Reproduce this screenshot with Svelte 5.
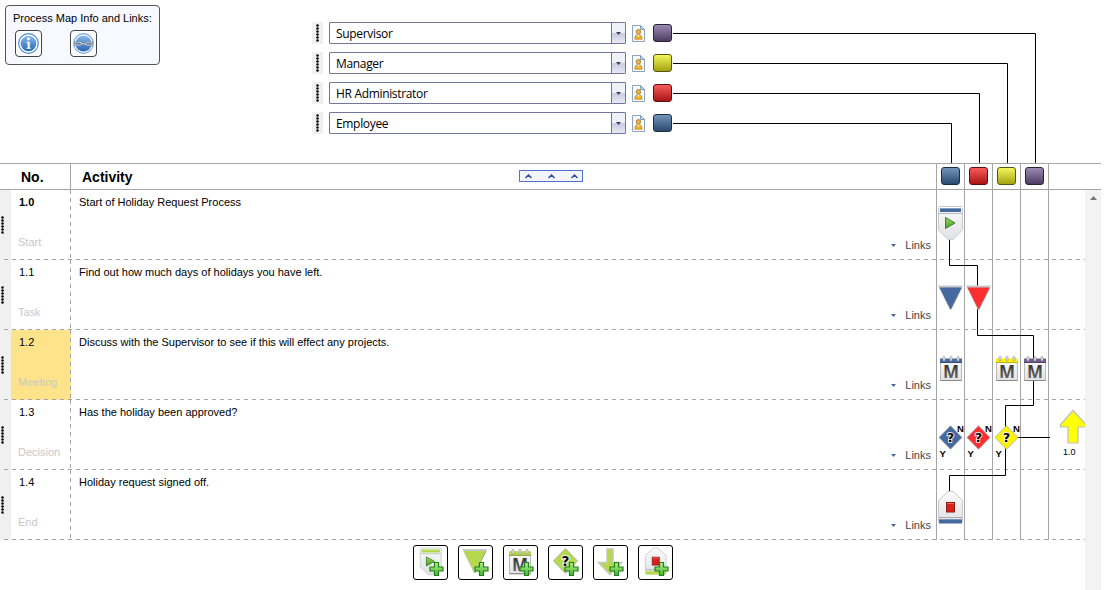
<script>
  let roles = [
    { name: "Supervisor", color: "purple" },
    { name: "Manager", color: "yellow" },
    { name: "HR Administrator", color: "red" },
    { name: "Employee", color: "blue" },
  ];

  const lanes = ["blue", "red", "yellow", "purple"];

  let selected = "1.2";

  let steps = [
    { no: "1.0", type: "Start", text: "Start of Holiday Request Process", shapes: ["start", "", "", ""] },
    { no: "1.1", type: "Task", text: "Find out how much days of holidays you have left.", shapes: ["task", "task", "", ""] },
    {
      no: "1.2",
      type: "Meeting",
      text: "Discuss with the Supervisor to see if this will effect any projects.",
      shapes: ["meeting", "", "meeting", "meeting"],
    },
    {
      no: "1.3",
      type: "Decision",
      text: "Has the holiday been approved?",
      shapes: ["decision", "decision", "decision", ""],
      jump: "1.0",
    },
    { no: "1.4", type: "End", text: "Holiday request signed off.", shapes: ["end", "", "", ""] },
  ];

  // place of each shape inside its toolbar button
  const tools = [
    { kind: "start", transform: "translate(5 -11.3) scale(0.87 0.81)" },
    { kind: "task", transform: "translate(2.3 -22.5)" },
    { kind: "meeting", transform: "translate(2 -23.8) scale(1 1.02)" },
    { kind: "decision", transform: "translate(2.3 -24.4) scale(1.05)" },
    { kind: "arrow", transform: "translate(-6 0.5)" },
    { kind: "end", transform: "translate(5 -15.8) scale(0.87 0.83)" },
  ];

  const colors = {
    blue: "#44699f",
    red: "#fb2f2f",
    yellow: "#fff200",
    purple: "#70598c",
    green: "#b5d84e",
  };
</script>

{#snippet shape(kind, color)}
  {#if kind === "start"}
    <path d="M1.5 17.5q0-1 1-1h22q1 0 1 1V40L16 49.5H11L1.5 40z" fill="url(#paper)" stroke="#c9cacd" />
    <rect x="3" y="18" width="21" height="4" fill={colors[color]} />
    <path d="M3 18.5h21" stroke="#fff" stroke-opacity=".35" />
    <path d="M2 23.5h23" stroke="#b8bbc0" />
    <path d="M8.5 27.5v11l9.5-5.5z" fill="url(#play)" stroke="#3d8126" />
  {:else if kind === "task"}
    <path d="M1 25.5h25l-11.6 24h-1.8z" fill="#c5c7ca" />
    <path d="M2.4 27.5h22.2L13.5 49.5z" fill={colors[color]} />
    <path d="M14 49.2 24.6 28" stroke="#333" stroke-opacity=".3" fill="none" />
  {:else if kind === "meeting"}
    <rect x="3.5" y="29.5" width="21" height="21" fill="url(#paper)" stroke="#b9babb" />
    <path d="M3.5 50.5h21" stroke="#888" />
    <rect x="3" y="28.5" width="22" height="4.5" fill={colors[color]} />
    <path d="M3 32.5h22" stroke="#000" stroke-opacity=".25" />
    {#each [6, 13, 20] as x}
      <rect {x} y="26.5" width="2" height="4.5" rx="1" fill="#eee" stroke="#9b9b9b" stroke-width=".8" />
    {/each}
    <text x="14" y="47.5" class="letter" fill="url(#steel)">M</text>
  {:else if kind === "decision"}
    <path d="M13.5 25.7 25 37.5 13.5 49.3 2 37.5z" fill={colors[color]} stroke="#a9abad" stroke-width=".8" />
    <text x="13.5" y="42.2" class="question">?</text>
  {:else if kind === "arrow"}
    <path d="M19 2.5h6v13.5h8.500L22 28 10.500 16H19z" fill={colors[color]} stroke="#c4c8bc" stroke-width="1.5" />
  {:else if kind === "end"}
    <path d="M1.5 30.5 11 21.5h5l9.5 9v21q0 1-1 1h-22q-1 0-1-1z" fill="url(#paper)" stroke="#c9cacd" />
    <path d="M2 47.5h23" stroke="#a9abae" />
    <rect x="2" y="49" width="23" height="4.5" fill={colors[color]} />
    <path d="M2 49.5h23" stroke="#fff" stroke-opacity=".3" />
    <rect x="9.5" y="32.5" width="8" height="9.5" fill="#d9231a" stroke="#8e1a12" />
    <path d="M10 33.5h7" stroke="#ef6b55" />
  {/if}
{/snippet}

{#snippet dots()}
  <svg class="dots" width="3" height="18" viewBox="0 0 3 18">
    {#each [0, 1, 2, 3, 4, 5] as i}
      <circle cx="1.5" cy={1.5 + i * 3} r="1.25" />
    {/each}
  </svg>
{/snippet}

<svg class="defs" width="0" height="0">
  <defs>
    <linearGradient id="paper" x1="0" y1="0" x2="0" y2="1">
      <stop offset="0" stop-color="#fbfbfd" />
      <stop offset="1" stop-color="#dfe1e4" />
    </linearGradient>
    <linearGradient id="play" x1="0" y1="0" x2="0" y2="1">
      <stop offset="0" stop-color="#a1dd5d" />
      <stop offset="1" stop-color="#3e9a24" />
    </linearGradient>
    <linearGradient id="plus" x1="0" y1="0" x2="0" y2="1">
      <stop offset="0" stop-color="#b4ef86" />
      <stop offset="1" stop-color="#46b931" />
    </linearGradient>
    <linearGradient id="steel" x1="0" y1="0" x2="0" y2="1">
      <stop offset="0" stop-color="#222" />
      <stop offset="1" stop-color="#777" />
    </linearGradient>
    <linearGradient id="ball" x1="0" y1="0" x2="0" y2="1">
      <stop offset="0" stop-color="#8cbcec" />
      <stop offset="1" stop-color="#2567b4" />
    </linearGradient>
  </defs>
</svg>

<div class="page">
  <header class="top">
    <div class="info">
      <span class="infoTitle">Process Map Info and Links:</span>
      <div class="infoButtons">
        <button class="infoButton" aria-label="Info">
          <svg width="25" height="25" viewBox="0 0 25 25">
            <circle cx="12.5" cy="12.5" r="9.8" fill="#fff" stroke="#4f8bcd" stroke-width="1.2" />
            <circle cx="12.5" cy="12.5" r="7.8" fill="url(#ball)" />
            <circle cx="12.5" cy="8" r="1.4" fill="#fff" />
            <path d="M10.5 10.8h3.2v6h1.3v1h-4.6v-1h1.3v-5h-1.2z" fill="#fff" />
          </svg>
        </button>
        <button class="infoButton" aria-label="Links">
          <svg width="25" height="25" viewBox="0 0 25 25">
            <circle cx="12.5" cy="12.5" r="9.8" fill="#fff" stroke="#78a5dc" stroke-width="1.2" />
            <circle cx="12.5" cy="12.5" r="8" fill="url(#ball)" />
            <g fill="none" stroke="#5c6b7c" stroke-width="2">
              <rect x="4" y="11.2" width="6.5" height="2.8" rx="1.4" />
              <rect x="14.5" y="11.2" width="6.5" height="2.8" rx="1.4" />
              <path d="m9.5 12 5.5 1.500" />
            </g>
            <g fill="none" stroke="#d9dfe5" stroke-width="1">
              <rect x="4" y="11.2" width="6.5" height="2.8" rx="1.4" />
              <rect x="14.5" y="11.2" width="6.5" height="2.8" rx="1.4" />
              <path d="m9.5 12 5.5 1.500" />
            </g>
          </svg>
        </button>
      </div>
    </div>

    <div class="roles">
      {#each roles as role}
        <div class="role">
          <div class="roleHandle">{@render dots()}</div>
          <div class="select">
            <span>{role.name}</span>
            <div class="selectArrow">
              <svg width="5" height="3" viewBox="0 0 5 3"><path d="M0 0h5L2.5 3z" fill="#414161" /></svg>
            </div>
          </div>
          <svg class="person" width="13" height="17" viewBox="0 0 13 17">
            <path d="M.5.5h8l4 4v12H.5z" fill="#f6fafd" stroke="#8da4bd" />
            <path d="M8.5.5v4h4z" fill="#cfdeed" stroke="#7e9abb" />
            <path d="M2.8 14.2q-.3-4.400 3.6-4.600 4 .2 3.700 4.600z" fill="#f0b51f" stroke="#bc8425" stroke-width=".7" />
            <circle cx="6.4" cy="6.8" r="2.3" fill="#e9b04a" stroke="#a9782f" stroke-width=".8" />
            <path d="m5.700 9.800.8 2.600.8-2.600z" fill="#fff" />
          </svg>
          <span class="swatch {role.color}"></span>
        </div>
      {/each}
    </div>
  </header>

  <div class="tableHead">
    <div class="headNo">No.</div>
    <div class="headActivity">
      <span>Activity</span>
      <svg class="collapse" width="64" height="12" viewBox="0 0 64 12">
        <rect x=".5" y=".5" width="63" height="11" fill="#f4f5fa" stroke="#4b74d6" />
        <path d="M6.5 8 9.5 5l3 3M29.5 8l3-3 3 3M52.5 8l3-3 3 3" fill="none" stroke="#2d4fae" stroke-width="1.5" />
      </svg>
    </div>
    {#each lanes as lane}
      <div class="lane"><span class="swatch {lane}"></span></div>
    {/each}
    <div class="laneEnd"></div>
  </div>

  <div class="body">
    <div class="steps">
      {#each steps as step}
        <div class="step">
          <div class="stepHandle">{@render dots()}</div>
          <div class="stepNo" class:selected={step.no === selected}>
            <span class="no" class:bold={step.type === "Start"}>{step.no}</span>
            <span class="type">{step.type}</span>
          </div>
          <div class="activity">
            <span>{step.text}</span>
            <span class="links">
              <svg width="5" height="3" viewBox="0 0 5 3"><path d="M0 0h5L2.5 3z" fill="#49649a" /></svg>
              Links
            </span>
          </div>
          {#each step.shapes as kind, i}
            <div class="lane">
              {#if kind}
                <svg class="shape" width="27" height="70" viewBox="0 0 27 70">
                  {@render shape(kind, lanes[i])}
                  {#if kind === "decision"}
                    <text x="20" y="32" class="answer">N</text>
                    <text x="2.5" y="57" class="answer">Y</text>
                  {/if}
                </svg>
              {/if}
            </div>
          {/each}
          <div class="laneEnd">
            {#if step.jump}
              <svg class="shape" width="36" height="70" viewBox="0 0 36 70">
                <path d="M24 10.5 11.5 24.5V27H19v16h10V27h8v-2.5z" fill="#ffff05" stroke="#bdbdbd" stroke-width="1.2" />
                <text x="14" y="55" class="jump">{step.jump}</text>
              </svg>
            {/if}
          </div>
        </div>
      {/each}

      <div class="toolbar">
        {#each tools as tool}
          <button class="tool" aria-label="Add {tool.kind}">
            <svg width="33" height="33" viewBox="0 0 33 33">
              <g transform={tool.transform}>{@render shape(tool.kind, "green")}</g>
              <path
                d="M20.500 16.500h4V21H29v4h-4.500v4.500h-4V25H16v-4h4.500z"
                fill="url(#plus)"
                stroke="#247f20"
                stroke-width="1.2"
              />
            </svg>
          </button>
        {/each}
      </div>
    </div>

    <div class="scrollbar">
      <svg width="7" height="4" viewBox="0 0 7 4"><path d="M0 4 3.5 0 7 4z" fill="#777" /></svg>
    </div>
  </div>

  <!-- lines from the roles to their lanes, and from step to step -->
  <svg class="connectors" width="1107" height="590" viewBox="0 0 1107 590">
    <path d="M673 33.5H1035.5V163M673 63.5H1007.5V163M673 93.5H979.5V163M673 123.5H951.5V163" />
    <path d="M949.5 239V265.5H977.5V335.5H1033.5V405.5H1005.5V475.5H949.5V492" />
    <path d="M1017 437.5H1050" />
  </svg>
</div>

<style>
  :global(body) {
    background: #fff;
  }

  .page {
    position: relative;
    width: 1107px;
    height: 590px;
    overflow: hidden;
    font-family: "Liberation Sans", Arial, sans-serif;
    font-size: 11px;
    color: #000;
  }

  .defs {
    position: absolute;
  }

  svg {
    display: block;
    flex: none;
  }

  button {
    padding: 0;
    background: #fff;
    display: flex;
    align-items: center;
    justify-content: center;
  }

  .top {
    display: flex;
    align-items: flex-start;
    height: 163px;
    box-sizing: border-box;
    padding: 5px 0 0 5px;
  }

  .info {
    width: 155px;
    height: 60px;
    box-sizing: border-box;
    padding: 6px 0 0 7px;
    border: 1px solid #555;
    border-radius: 4px;
    background: #f8f8ff;
  }

  .infoTitle {
    display: block;
    line-height: 13px;
    white-space: nowrap;
  }

  .infoButtons {
    display: flex;
    gap: 28px;
    margin: 5px 0 0 2px;
  }

  .infoButton {
    width: 27px;
    height: 27px;
    border: 1px solid #444;
    border-radius: 4px;
  }

  .roles {
    display: flex;
    flex-direction: column;
    gap: 8px;
    margin: 17px 0 0 152px;
  }

  .role {
    display: flex;
    align-items: center;
    height: 22px;
  }

  .roleHandle {
    display: flex;
    align-items: center;
    justify-content: center;
    width: 11px;
    height: 22px;
    background: #f0f0f0;
  }

  .select {
    display: flex;
    justify-content: space-between;
    width: 297px;
    height: 22px;
    box-sizing: border-box;
    margin-left: 6px;
    border: 1px solid #75759a;
    border-radius: 1px;
    font-family: "Open Sans", "Noto Sans", sans-serif;
    font-size: 12px;
    line-height: 22px;
  }

  .select span {
    padding-left: 6px;
    letter-spacing: -0.33px;
  }

  .selectArrow {
    display: flex;
    align-items: center;
    justify-content: center;
    width: 13px;
    border-left: 1px solid #75759a;
    background: linear-gradient(#f0f0f8 50%, #c6c9e0 50%, #e9eaf5);
  }

  .person {
    margin: 0 8px 0 6px;
  }

  .swatch {
    width: 19px;
    height: 18px;
    box-sizing: border-box;
    border: 1px solid #333;
    border-radius: 3px;
  }

  .blue {
    background: linear-gradient(#7494bb, #2c4a6f);
    border-color: #1c2e45;
  }

  .red {
    background: linear-gradient(#f95b5b, #a91414);
    border-color: #5b1010;
  }

  .yellow {
    background: linear-gradient(#f5f55c, #a3a311);
    border-color: #555510;
  }

  .purple {
    background: linear-gradient(#9a89b1, #4e3d63);
    border-color: #2b2238;
  }

  .tableHead {
    display: flex;
    width: 1101px;
    height: 27px;
    box-sizing: border-box;
    border-top: 1px solid #a5a5a5;
    border-bottom: 1px solid #a5a5a5;
    font-size: 14px;
    font-weight: bold;
    line-height: 27px;
  }

  .headNo {
    width: 71px;
    box-sizing: border-box;
    padding-left: 21px;
    border-right: 1px solid #a5a5a5;
  }

  .headActivity {
    display: flex;
    flex: 1;
    padding-left: 11px;
  }

  .headActivity span {
    width: 437px;
  }

  .collapse {
    margin-top: 6px;
  }

  .lane {
    width: 28px;
    box-sizing: border-box;
    border-left: 1px solid #a5a5a5;
  }

  .lane .swatch {
    display: block;
    margin: 3px 0 0 4px;
  }

  .laneEnd {
    width: 37px;
    box-sizing: border-box;
    border-left: 1px solid #a5a5a5;
  }

  .tableHead .laneEnd {
    width: 53px;
  }

  .body {
    display: flex;
    height: 400px;
  }

  .steps {
    width: 1085px;
  }

  .step {
    display: flex;
    position: relative;
    height: 70px;
  }

  .step::after {
    content: "";
    position: absolute;
    left: 4px;
    right: 0;
    bottom: 0;
    height: 1px;
    background: repeating-linear-gradient(90deg, #a5a5a5 0 4px, transparent 4px 8px);
  }

  .stepHandle {
    display: flex;
    align-items: center;
    width: 11px;
    box-sizing: border-box;
    padding-left: 1px;
    background: #f0f0f0;
  }

  .stepNo {
    display: flex;
    flex-direction: column;
    justify-content: space-between;
    position: relative;
    width: 60px;
    box-sizing: border-box;
    padding: 6px 0 11px 7px;
    line-height: 13px;
  }

  .stepNo::after {
    content: "";
    position: absolute;
    top: 0;
    right: 0;
    bottom: 0;
    width: 1px;
    background: repeating-linear-gradient(#a5a5a5 0 4px, transparent 4px 8px);
  }

  .selected {
    background: #ffe38a;
  }

  .no {
    padding-left: 1px;
  }

  .bold {
    font-weight: bold;
  }

  .type {
    color: #c8c8c8;
  }

  .activity {
    display: flex;
    flex: 1;
    flex-direction: column;
    justify-content: space-between;
    padding: 6px 5px 8px 8px;
    line-height: 13px;
  }

  .links {
    display: flex;
    align-items: center;
    align-self: flex-end;
    gap: 9px;
    color: #444;
  }

  .shape {
    position: relative;
    z-index: 2;
    overflow: visible;
  }

  .laneEnd .shape {
    overflow: hidden;
  }

  .letter {
    font: bold 17px "Open Sans", "Liberation Sans", sans-serif;
    text-anchor: middle;
  }

  .question {
    font: bold 13px "DejaVu Sans", sans-serif;
    text-anchor: middle;
    fill: #000;
    stroke: #fff;
    stroke-width: 1.6px;
    paint-order: stroke;
  }

  .answer {
    font: bold 9.5px "Liberation Sans", Arial, sans-serif;
  }

  .jump {
    font-size: 9px;
  }

  .toolbar {
    display: flex;
    gap: 10px;
    margin: 5px 0 0 413px;
  }

  .tool {
    width: 35px;
    height: 35px;
    border: 1px solid #000;
    border-radius: 3px;
  }

  .scrollbar {
    display: flex;
    justify-content: center;
    width: 16px;
    box-sizing: border-box;
    padding-top: 6px;
    background: #f3f3f3;
  }

  .connectors {
    position: absolute;
    top: 0;
    left: 0;
    z-index: 1;
    pointer-events: none;
  }

  .connectors path {
    fill: none;
    stroke: #000;
  }
</style>
